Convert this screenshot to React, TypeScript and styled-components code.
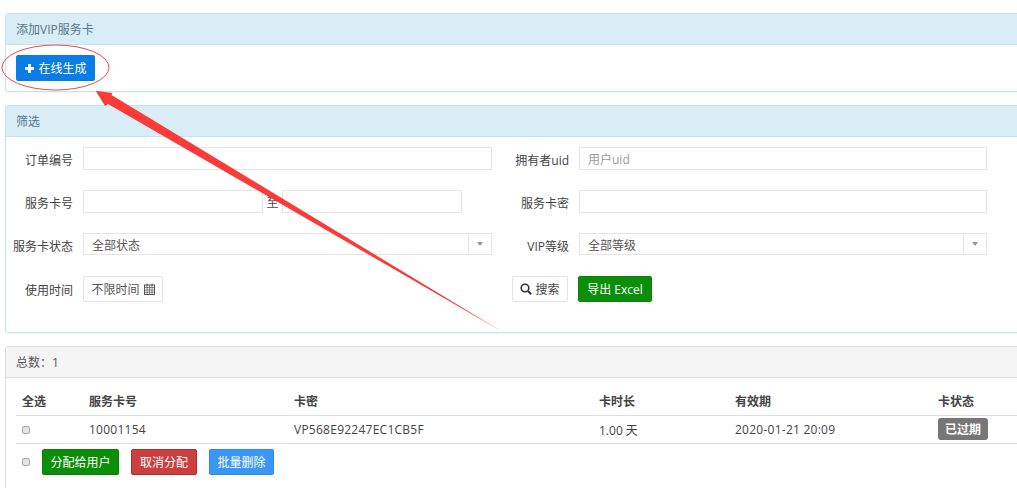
import React from "react";
import styled, { createGlobalStyle } from "styled-components";

const Global = createGlobalStyle`
  html, body { margin: 0; padding: 0; background: #fff; overflow: hidden; width: 1017px; height: 488px; }
  body { font-family: "Open Sans", "Liberation Sans", "Noto Sans CJK SC", sans-serif; font-size: 12px; color: #444; }
  * { box-sizing: border-box; }
`;
const Page = styled.div`
  position: relative; width: 1017px; height: 488px; overflow: hidden;
  padding: 13px 0 0 5px; display: flex; flex-direction: column; gap: 13px;
`;
const Panel = styled.section<{ $h: number; $grey?: boolean }>`
  width: 1100px; height: ${p => p.$h}px; flex: none; border-radius: 3px;
  border: 1px solid ${p => (p.$grey ? "#ddd" : "#bce8f1")};
  box-shadow: 0 1px 1px rgba(0,0,0,.05);
`;
const PanelHead = styled.div<{ $grey?: boolean }>`
  height: 31px; padding: 0 10px; display: flex; align-items: center; font-size: 12px;
  background: ${p => (p.$grey ? "#f5f5f5" : "#d9edf7")};
  color: ${p => (p.$grey ? "#555" : "#56768a")};
  border-bottom: 1px solid ${p => (p.$grey ? "#ddd" : "#bce8f1")};
`;
const AddBody = styled.div` padding: 10px; `;
const Btn = styled.button<{ $bg: string; $bd: string; $w: number; $h?: number }>`
  width: ${p => p.$w}px; height: ${p => p.$h ?? 26}px; padding: 0; flex: none;
  display: inline-flex; align-items: center; justify-content: center; gap: 3px;
  background: ${p => p.$bg}; border: 1px solid ${p => p.$bd}; border-radius: 2px;
  color: #fff; font: inherit; font-size: 12px;
`;
const Form = styled.div`
  padding: 10px 0 0 0; display: flex; flex-direction: column; gap: 20px; width: 982px;
`;
const Row = styled.div<{ $h: number }>`
  display: grid; grid-template-columns: 67px 419px 77px 418px;
  height: ${p => p.$h}px; align-items: stretch;
`;
const Label = styled.label`
  display: flex; align-items: center; justify-content: flex-end; white-space: nowrap; color: #444; padding-top: 2px;
`;
const Wrap = styled.div` margin-left: 10px; display: flex; align-items: stretch; min-height: 0; `;
const Input = styled.div<{ $w?: number }>`
  width: ${p => (p.$w ? `${p.$w}px` : "100%")}; flex: none; height: 100%;
  border: 1px solid #e5e5e5; background: #fff; padding: 0 8px; display: flex; align-items: center; color: #999;
`;
const To = styled.span` width: 19px; flex: none; display: flex; align-items: center; justify-content: center; `;
const Select = styled.div`
  width: 100%; height: 22px; border: 1px solid #e5e5e5; display: flex; align-items: center; padding-left: 8px; color: #555;
`;
const SelectText = styled.span` padding-top: 2px; `;
const Caret = styled.span`
  margin-left: auto; width: 23px; height: 100%; border-left: 1px solid #e5e5e5; display: flex; align-items: center; justify-content: center;
  &::after { content: ""; border: 3.5px solid transparent; border-top: 4px solid #999; border-bottom: 0; }
`;
const DateBtn = styled.div`
  width: 80px; border: 1px solid #e5e5e5; border-radius: 2px; display: flex; align-items: center; justify-content: center; gap: 4px; color: #555;
`;
const Actions = styled.div` grid-column: 3 / 5; padding-left: 20px; display: flex; gap: 10px; `;
const Ghost = styled.button`
  width: 56px; height: 26px; padding: 0; display: flex; align-items: center; justify-content: center; gap: 3px;
  border: 1px solid #e5e5e5; border-radius: 2px; background: #fff; color: #444; font: inherit;
`;
const ListBody = styled.div` padding: 9px 10px 0; `;
const TRow = styled.div<{ $h: number; $bold?: boolean }>`
  display: grid; grid-template-columns: 67px 205px 305px 136px 203px 1fr; height: ${p => p.$h}px; align-items: center;
  border-bottom: 1px solid #ddd; color: #444; font-weight: ${p => (p.$bold ? 700 : 400)};
`;
const Cell = styled.div` padding-left: 6px; white-space: nowrap; `;
const DataCell = styled(Cell)` letter-spacing: .25px; `;
const Check = styled.span`
  display: inline-block; width: 8px; height: 8px; background: #e4e4e4; border: 1px solid #aaa; border-radius: 2px; flex: none;
`;
const Badge = styled.span`
  display: inline-flex; width: 50px; height: 22px; align-items: center; justify-content: center; margin-top: -1px;
  background: #777; color: #fff; border-radius: 3px; font-weight: 700; vertical-align: top;
`;
const Foot = styled.div` display: flex; align-items: center; gap: 12px; padding: 5px 0 0 6px; `;
const Overlay = styled.svg` position: absolute; left: 0; top: 0; pointer-events: none; `;

const Plus = () => (
  <svg width="11" height="11" viewBox="0 0 10 10"><path d="M3.7 1h2.6v2.7H9v2.6H6.3V9H3.7V6.3H1V3.7h2.7z" fill="#fff" /></svg>
);
const Cal = () => (
  <svg width="11" height="12" viewBox="0 0 11 12" fill="none" stroke="#555" strokeWidth="1">
    <rect x=".5" y="2" width="10" height="9.5" /><path d="M.5 4.5h10M.5 7h10M.5 9.2h10M3 2v9.5M5.5 2v9.5M8 2v9.5" strokeWidth=".7" /><path d="M3 .5v2M8 .5v2" />
  </svg>
);
const Search = () => (
  <svg width="12" height="12" viewBox="0 0 12 12" fill="none" stroke="#333" strokeWidth="1.6">
    <circle cx="5" cy="5" r="3.8" /><path d="M8 8l3.2 3.2" strokeWidth="2" />
  </svg>
);

export default function App() {
  return (
    <>
      <Global />
      <Page>
        <Panel $h={79}>
          <PanelHead>添加VIP服务卡</PanelHead>
          <AddBody>
            <Btn $bg="#0a7ce6" $bd="#0a7ce6" $w={79}><Plus />在线生成</Btn>
          </AddBody>
        </Panel>
        <Panel $h={228}>
          <PanelHead>筛选</PanelHead>
          <Form>
            <Row $h={23}>
              <Label>订单编号</Label>
              <Wrap><Input /></Wrap>
              <Label>拥有者uid</Label>
              <Wrap><Input>用户uid</Input></Wrap>
            </Row>
            <Row $h={23}>
              <Label>服务卡号</Label>
              <Wrap><Input $w={180} /><To>至</To><Input $w={180} /></Wrap>
              <Label>服务卡密</Label>
              <Wrap><Input /></Wrap>
            </Row>
            <Row $h={23}>
              <Label>服务卡状态</Label>
              <Wrap><Select><SelectText>全部状态</SelectText><Caret /></Select></Wrap>
              <Label>VIP等级</Label>
              <Wrap><Select><SelectText>全部等级</SelectText><Caret /></Select></Wrap>
            </Row>
            <Row $h={26}>
              <Label>使用时间</Label>
              <Wrap><DateBtn>不限时间 <Cal /></DateBtn></Wrap>
              <Actions>
                <Ghost><Search />搜索</Ghost>
                <Btn $bg="#0b8f0b" $bd="#0a7f0a" $w={74}>导出 Excel</Btn>
              </Actions>
            </Row>
          </Form>
        </Panel>
        <Panel $h={160} $grey>
          <PanelHead $grey>总数：1</PanelHead>
          <ListBody>
            <TRow $h={29} $bold>
              <Cell>全选</Cell><Cell>服务卡号</Cell><Cell>卡密</Cell><Cell>卡时长</Cell><Cell>有效期</Cell><Cell>卡状态</Cell>
            </TRow>
            <TRow $h={28}>
              <Cell><Check /></Cell><DataCell>10001154</DataCell><DataCell>VP568E92247EC1CB5F</DataCell><Cell>1.00 天</Cell><DataCell>2020-01-21 20:09</DataCell><Cell><Badge>已过期</Badge></Cell>
            </TRow>
            <Foot>
              <Check />
              <Btn $bg="#0b8f0b" $bd="#0a7f0a" $w={77}>分配给用户</Btn>
              <Btn $bg="#c9403f" $bd="#b52b2b" $w={66}>取消分配</Btn>
              <Btn $bg="#3b97f5" $bd="#2f8be8" $w={65}>批量删除</Btn>
            </Foot>
          </ListBody>
        </Panel>
        <Overlay width="1017" height="488" viewBox="0 0 1017 488">
          <ellipse cx="55.5" cy="67.5" rx="53.5" ry="22.5" fill="none" stroke="#ee4a4a" strokeWidth="1" />
          <path d="M95.7 90.7 L112.5 93 L111.5 95 L501 331 L108 104 L105 106 Z" fill="#fb3a3a" />
        </Overlay>
      </Page>
    </>
  );
}
